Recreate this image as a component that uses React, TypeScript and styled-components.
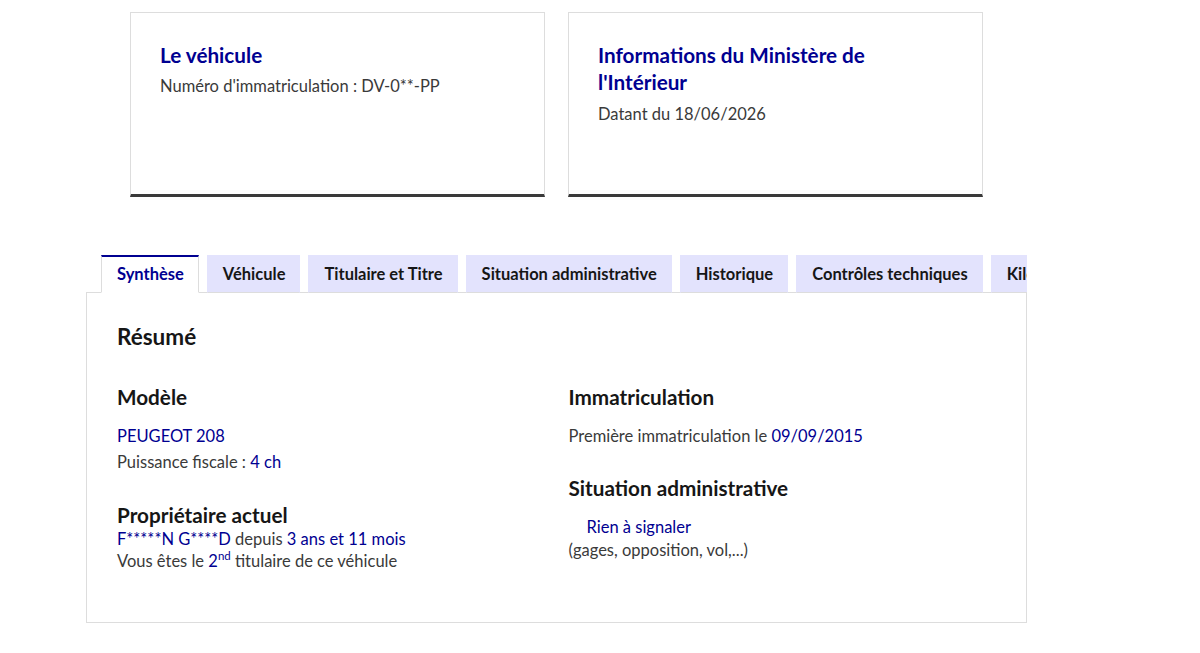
import styled, { createGlobalStyle } from 'styled-components';

const Global = createGlobalStyle`
  body {
    margin: 0;
    background: #fff;
    font-family: 'Lato', 'Noto Sans', sans-serif;
    color: #3a3a3a;
  }
`;

const Page = styled.div`
  width: 941px;
  margin-left: 86px;
  padding-top: 12px;
`;
const Cards = styled.div`
  display: grid;
  grid-template-columns: 1fr 1fr;
  gap: 23px;
  padding: 0 44px;
`;
const Card = styled.div`
  height: 185px;
  box-sizing: border-box;
  border: 1px solid #dddddd;
  border-bottom: 3px solid #3a3a3a;
  padding: 29px 29px;
`;
const CardTitle = styled.h3`
  margin: 0;
  font-size: 20.7px;
  line-height: 27px;
  font-weight: 700;
  color: #000091;
`;
const CardText = styled.p<{ $gap?: number }>`
  margin: ${(p) => p.$gap ?? 5}px 0 0;
  font-size: 16.5px;
  line-height: 24px;
`;

const Tabs = styled.div`
  margin-top: 58px;
`;
const TabList = styled.ul`
  display: flex;
  gap: 8px;
  list-style: none;
  margin: 0;
  padding: 0 0 0 15px;
  overflow: hidden;
  position: relative;
  z-index: 1;
  margin-bottom: -1px;
`;
const Tab = styled.li<{ $active?: boolean }>`
  flex: none;
  height: 38px;
  box-sizing: border-box;
  display: flex;
  align-items: center;
  padding: 0 14px 2px 15px;
  font-size: 16.5px;
  font-weight: 700;
  white-space: nowrap;
  background: ${(p) => (p.$active ? '#fff' : '#e3e3fd')};
  color: ${(p) => (p.$active ? '#000091' : '#161616')};
  border-top: 2px solid ${(p) => (p.$active ? '#000091' : 'transparent')};
  border-left: 1px solid ${(p) => (p.$active ? '#dddddd' : 'transparent')};
  border-right: 1px solid ${(p) => (p.$active ? '#dddddd' : 'transparent')};
  border-bottom: 1px solid ${(p) => (p.$active ? '#fff' : '#dddddd')};
`;
const Panel = styled.div`
  border: 1px solid #dddddd;
  height: 331px;
  box-sizing: border-box;
  padding: 30px;
`;
const Title = styled.h2`
  margin: 0;
  font-size: 22.5px;
  line-height: 28px;
  font-weight: 700;
  color: #161616;
`;
const Columns = styled.div`
  display: grid;
  grid-template-columns: 1fr 1fr;
  gap: 24px;
  margin-top: 32px;
`;
const Heading = styled.h3<{ $gap?: number }>`
  margin: ${(p) => p.$gap ?? 0}px 0 0;
  font-size: 20.7px;
  line-height: 28px;
  font-weight: 700;
  color: #161616;
`;
const Line = styled.p<{ $gap?: number; $lh?: number; $indent?: number }>`
  margin: ${(p) => p.$gap ?? 0}px 0 0 ${(p) => p.$indent ?? 0}px;
  font-size: 16.5px;
  line-height: ${(p) => p.$lh ?? 24}px;
`;
const Blue = styled.span`
  color: #000091;
`;
const Sup = styled.sup`
  font-size: 11.5px;
  line-height: 0;
  vertical-align: 7px;
  color: #000091;
`;

const tabs = [
  'Synthèse',
  'Véhicule',
  'Titulaire et Titre',
  'Situation administrative',
  'Historique',
  'Contrôles techniques',
  'Kilométrage',
];

export default function App() {
  return (
    <Page>
      <Global />
      <Cards>
        <Card>
          <CardTitle>Le véhicule</CardTitle>
          <CardText>Numéro d'immatriculation : DV-0**-PP</CardText>
        </Card>
        <Card>
          <CardTitle>Informations du Ministère de l'Intérieur</CardTitle>
          <CardText $gap={6}>Datant du 18/06/2026</CardText>
        </Card>
      </Cards>

      <Tabs>
        <TabList>
          {tabs.map((t, i) => (
            <Tab key={t} $active={i === 0}>
              {t}
            </Tab>
          ))}
        </TabList>
        <Panel>
          <Title>Résumé</Title>
          <Columns>
            <div>
              <Heading>Modèle</Heading>
              <Line $gap={13}>
                <Blue>PEUGEOT 208</Blue>
              </Line>
              <Line $gap={2}>
                Puissance fiscale : <Blue>4 ch</Blue>
              </Line>
              <Heading $gap={27}>Propriétaire actuel</Heading>
              <Line $lh={21}>
                <Blue>F*****N G****D</Blue> depuis <Blue>3 ans et 11 mois</Blue>
              </Line>
              <Line $lh={23}>
                Vous êtes le <Blue>2</Blue>
                <Sup>nd</Sup> titulaire de ce véhicule
              </Line>
            </div>
            <div>
              <Heading>Immatriculation</Heading>
              <Line $gap={13}>
                Première immatriculation le <Blue>09/09/2015</Blue>
              </Line>
              <Heading $gap={26}>Situation administrative</Heading>
              <Line $gap={13} $indent={18}>
                <Blue>Rien à signaler</Blue>
              </Line>
              <Line $lh={23}>(gages, opposition, vol,...)</Line>
            </div>
          </Columns>
        </Panel>
      </Tabs>
    </Page>
  );
}
